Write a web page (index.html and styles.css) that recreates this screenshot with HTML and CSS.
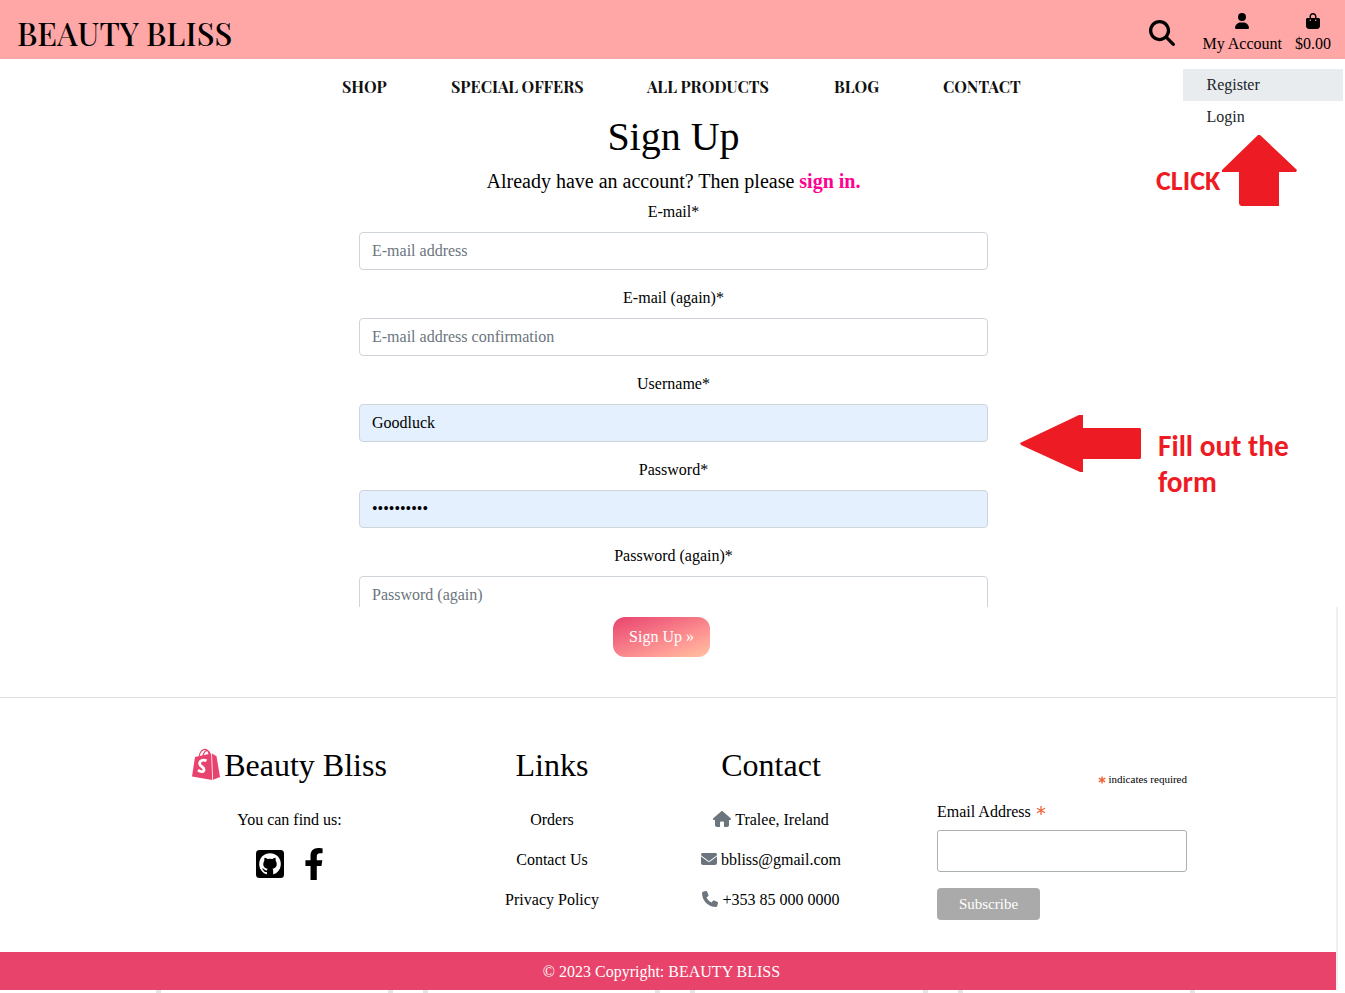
FILE: index.html
```html
<!DOCTYPE html>
<html lang="en">
<head>
<meta charset="utf-8">
<title>Beauty Bliss</title>
<link rel="stylesheet" href="styles.css">
</head>
<body>
<header class="topbar">
  <a class="brand">BEAUTY BLISS</a>
  <div class="tools">
    <svg class="search" viewBox="0 0 512 512"><path d="M416 208c0 45.9-14.9 88.3-40 122.7L502.6 457.4c12.5 12.5 12.5 32.8 0 45.3s-32.8 12.5-45.3 0L330.7 376c-34.4 25.2-76.8 40-122.7 40C93.1 416 0 322.9 0 208S93.1 0 208 0S416 93.1 416 208zM208 352a144 144 0 1 0 0-288 144 144 0 1 0 0 288z"/></svg>
    <div class="tool account">
      <svg viewBox="0 0 448 512"><path d="M224 256A128 128 0 1 0 224 0a128 128 0 1 0 0 256zm-45.7 48C79.8 304 0 383.8 0 482.3C0 498.7 13.3 512 29.7 512H418.3c16.4 0 29.7-13.3 29.7-29.7C448 383.8 368.2 304 269.7 304H178.3z"/></svg>
      <span>My Account</span>
      <div class="dropdown"><a class="active">Register</a><a>Login</a></div>
    </div>
    <div class="tool">
      <svg viewBox="0 0 448 512"><path d="M160 112c0-35.3 28.7-64 64-64s64 28.7 64 64v48H160V112zm-48 48H48c-26.5 0-48 21.5-48 48V416c0 53 43 96 96 96H352c53 0 96-43 96-96V208c0-26.5-21.5-48-48-48H336V112C336 50.1 285.9 0 224 0S112 50.1 112 112v48zm24 48a24 24 0 1 1 0 48 24 24 0 1 1 0-48zm152 24a24 24 0 1 1 48 0 24 24 0 1 1 -48 0z"/></svg>
      <span>$0.00</span>
    </div>
  </div>
</header>
<nav class="nav">
  <a class="n-shop">SHOP</a><a class="n-offers">SPECIAL OFFERS</a><a class="n-all">ALL PRODUCTS</a><a class="n-blog">BLOG</a><a class="n-contact">CONTACT</a>
</nav>
<main class="signup">
  <h1>Sign Up</h1>
  <p class="lead">Already have an account? Then please <a>sign in.</a></p>
  <form class="form">
    <label for="email">E-mail*</label>
    <input id="email" type="email" placeholder="E-mail address">
    <label for="email2">E-mail (again)*</label>
    <input id="email2" type="email" placeholder="E-mail address confirmation">
    <label for="user">Username*</label>
    <input id="user" class="filled" type="text" value="Goodluck">
    <label for="pw">Password*</label>
    <input id="pw" class="filled" type="password" value="goodluck12">
    <label for="pw2">Password (again)*</label>
    <input id="pw2" type="password" placeholder="Password (again)">
  </form>
</main>
<section class="lower">
  <div class="submit"><button class="btn">Sign Up »</button></div>
  <footer class="footer">
    <div class="col about">
      <h2><svg class="bag" viewBox="0 0 28 32"><path class="handle" d="M7 9C7.500 4 10.500 1 13.500 1.300 16 1.600 17 4 17.200 8M10.800 8.500C11.300 4.500 14 2 16 2.700 18 3.500 18 6 18.300 7.500"/><path class="front" d="M3 9 19.200 5.600 20.200 32 0 28.400z"/><path class="side" d="M20 5.600 24.500 8.300 28 29 21 31.800z"/><path class="mark" d="M14.500 12.800C11 11.200 7.600 12.700 7.600 15.500 7.700 19 12.300 18.600 12 21.800 11.700 24.300 8.600 24.200 6 22.200"/></svg>Beauty Bliss</h2>
      <p>You can find us:</p>
      <div class="social">
        <svg class="github" viewBox="0 0 28 28"><rect width="28" height="28" rx="3.500"/><circle class="disc" cx="14" cy="14" r="10.800"/><path d="M8.600 7.700C10 7.600 11.100 8.500 11.700 9Q14 8.400 16.300 9C17 8.500 18.200 7.600 19.400 7.700Q20 9.200 19.600 10.500C22 14.500 20.500 18.300 16.400 18.700 17.400 19.600 17.200 21 17.200 25H10.900V22C8.500 22.500 8 21 7.200 20 6.300 18.900 5.700 18.900 6.200 18.600 8 18.200 8.500 21 10.900 20.400Q11 19.300 11.700 18.700C7.600 18.300 6 14.500 8.400 10.500Q8 9 8.600 7.700z"/></svg>
        <svg class="facebook" viewBox="22 0 276 512"><path d="M279.140 288l14.220-92.660h-88.910v-60.130c0-25.350 12.420-50.060 52.240-50.060h40.420V6.260S260.430 0 225.360 0c-73.220 0-121.080 44.380-121.080 124.720v70.620H22.890V288h81.390v224h100.170V288z"/></svg>
      </div>
    </div>
    <div class="col links">
      <h2>Links</h2>
      <p>Orders</p><p>Contact Us</p><p>Privacy Policy</p>
    </div>
    <div class="col contact">
      <h2>Contact</h2>
      <p><svg class="house" viewBox="0 0 576 512"><path d="M575.800 255.500c0 18-15 32.100-32 32.100h-32l.7 160.200c0 35-28 64.200-64 64.200h-96V376c0-22-18-40-40-40h-48c-22 0-40 18-40 40v136h-96c-35 0-64-29-64-64V287.600H32c-18 0-32-14-32-32.100c0-9 3-17 10-24L266.400 8c7-7 15-8 22-8s15 2 21 7L564.800 231.500c8 7 12 15 11 24z"/></svg>Tralee, Ireland</p>
      <p><svg viewBox="0 0 512 512"><path d="M48 64C21.500 64 0 85.500 0 112c0 15.100 7.100 29.300 19.200 38.400L236.800 313.600c11.400 8.500 27 8.500 38.400 0L492.800 150.400c12.100-9.100 19.200-23.300 19.200-38.400c0-26.500-21.500-48-48-48H48zM0 176V384c0 35.300 28.700 64 64 64H448c35.300 0 64-28.700 64-64V176L294.400 339.200c-22.800 17.100-54 17.100-76.800 0L0 176z"/></svg>bbliss@gmail.com</p>
      <p><svg viewBox="0 0 512 512"><path d="M164.900 24.600c-7.700-18.600-28-28.500-47.400-23.200l-88 24C12.100 30.200 0 46 0 64C0 311.400 200.600 512 448 512c18 0 33.800-12.100 38.600-29.500l24-88c5.300-19.400-4.600-39.700-23.200-47.400l-96-40c-16.300-6.800-35.200-2.100-46.300 11.600L304.700 368C234.300 334.700 177.300 277.700 144 207.300L193.300 167c13.700-11.200 18.400-30 11.600-46.300l-40-96z"/></svg>+353 85 000 0000</p>
    </div>
    <form class="subscribe">
      <div class="required"><svg class="star" viewBox="-5 -5 10 10"><path d="M0-4.500V4.500M-4-2.300 4 2.300M-4 2.300 4-2.300"/></svg>indicates required</div>
      <label for="news">Email Address<svg class="star" viewBox="-5 -5 10 10"><path d="M0-4.500V4.500M-4-2.300 4 2.300M-4 2.300 4-2.300"/></svg></label>
      <input id="news" type="email">
      <button type="button">Subscribe</button>
    </form>
  </footer>
  <div class="copyright">© 2023 Copyright: BEAUTY BLISS</div>
</section>
<div class="ticks"><i></i><i></i><i></i><i></i><i></i><i></i><i></i><i></i></div>
<div class="note click">CLICK</div>
<svg class="arrow up" viewBox="0 0 76 71"><path d="M37 0 39 0 76 35 75 37H58V71H20L18 69V37H1L1 35z"/></svg>
<svg class="arrow left" viewBox="0 0 121 58"><path d="M0 28 59 0H63V13H120L121 14V43L120 44H63V57H60L1 30z"/></svg>
<div class="note fill">Fill out the<br>form</div>
</body>
</html>
```
FILE: styles.css
```css
* { box-sizing: border-box; }
body {
  margin: 0; width: 1345px; height: 993px; overflow: hidden; position: relative;
  display: flex; flex-direction: column;
  background: #fff; color: #000; font: 16px/24px "Liberation Serif", serif;
}
h1, h2, p { margin: 0; font-weight: 400; }
input, button { font: inherit; }

.topbar { height: 59px; flex: none; background: #ffa6a6; display: flex; justify-content: space-between; padding: 0 14px 0 17px; }
.brand { font-family: "Playfair Display", "Liberation Serif", serif; font-weight: 500; font-size: 32px; line-height: 65px; white-space: nowrap; }
.tools { display: flex; align-items: flex-start; }
.search { width: 26px; height: 26px; margin: 20px 27px 0 0; }
.tool { display: flex; flex-direction: column; align-items: center; padding-top: 13px; position: relative; }
.tool > svg { height: 16px; width: 14px; margin-bottom: 3px; }
.account { margin-right: 13px; }
.dropdown { position: absolute; top: 69px; left: -19px; width: 160px; color: #212529; }
.dropdown a { display: block; height: 32px; line-height: 32px; padding-left: 23px; }
.dropdown .active { background: #e9ecef; }

.nav { flex: none; height: 56px; padding: 16px 0 0 342px; display: flex; gap: 64px; font-family: "Playfair Display", "Liberation Serif", serif; font-weight: 700; line-height: 24px; white-space: nowrap; color: #111; }
.n-shop { width: 45px; }
.n-offers { width: 132px; }
.n-all { width: 123px; }
.n-blog { width: 45px; }

.signup { flex: none; height: 492px; overflow: hidden; width: 629px; margin-left: 359px; text-align: center; }
.signup h1 { font-size: 40px; line-height: 44px; }
.lead { font-size: 20px; line-height: 30px; padding-top: 7px; }
.lead a { color: #ff0090; font-weight: 700; }
.form { display: flex; flex-direction: column; padding-top: 4px; }
.form label { line-height: 24px; margin-bottom: 8px; }
.form input { height: 38px; margin-bottom: 16px; border: 1px solid #ced4da; border-radius: 4px; padding: 6px 12px; background: #fff; color: #000; }
.form input::placeholder { color: #6c757d; opacity: 1; }
.form .filled { background: #e4f0fe; }

.lower { flex: none; width: 1338px; height: 383px; border-right: 2px solid #f0f0f0; }
.submit { height: 91px; padding: 10px 0 0 613px; border-bottom: 1px solid #dee2e6; }
.btn { width: 97px; height: 40px; border: 0; border-radius: 12px; padding: 0; color: #fff; background: linear-gradient(160deg, #e8436e, #ff9b95 70%, #ffc3a0); }
.footer { height: 254px; padding-top: 48px; display: flex; text-align: center; }
.col h2 { font-size: 32px; line-height: 38px; margin-bottom: 24px; white-space: nowrap; }
.col p { line-height: 24px; margin-bottom: 16px; }
.about { width: 195px; margin-left: 192px; }
.bag { width: 28px; height: 32px; margin-right: 4px; vertical-align: -4px; }
.bag .handle { fill: none; stroke: #e8436e; stroke-width: 1.2; }
.bag .front, .bag .side { fill: #e8436e; }
.bag .mark { fill: none; stroke: #fff; stroke-width: 2.8; }
.social { display: flex; align-items: center; justify-content: center; gap: 21px; padding-right: 1px; }
.github { width: 28px; height: 28px; }
.github .disc { fill: #fff; }
.facebook { width: 18px; height: 32px; }
.links { width: 100px; margin-left: 115px; }
.contact { width: 150px; margin-left: 94px; }
.contact p svg { width: 16px; height: 16px; margin-right: 4px; vertical-align: -2px; fill: #6c757d; }
.contact p .house { width: 18px; }
.subscribe { width: 250px; margin-left: 91px; padding-top: 24px; display: flex; flex-direction: column; align-items: flex-start; }
.required { align-self: flex-end; font-size: 11px; line-height: 18px; }
.star { fill: none; stroke: #f0643c; stroke-width: 1.3; }
.required .star { width: 8px; height: 8px; margin-right: 3px; vertical-align: -1px; stroke-width: 1.8; }
.subscribe label { line-height: 24px; margin: 12px 0 6px; height: 24px; }
.subscribe label .star { width: 10px; height: 11px; margin-left: 5px; vertical-align: 1px; }
.subscribe input { width: 250px; height: 42px; border: 1px solid #abb0b2; border-radius: 3px; background: #fff; }
.subscribe button { width: 103px; height: 32px; margin-top: 16px; padding: 0; border: 0; border-radius: 4px; background: #aaa; color: #fff; font-size: 15px; }
.copyright { width: 1336px; height: 38px; line-height: 39px; background: #e8436b; color: #fff; text-align: center; padding-right: 13px; }

.ticks { flex: none; height: 3px; display: grid; grid-template-columns: 156px 232px 35px 232px 35px 233px 35px 232px; }
.ticks i { height: 3px; width: 5px; background: #e5e5e5; justify-self: end; margin-right: -5px; }

.note { position: absolute; color: #ed1c24; font: 700 29.33px/36px Carlito, Lato, sans-serif; white-space: nowrap; }
.click { left: 1156px; top: 163px; font-size: 28px; }
.fill { left: 1158px; top: 428px; }
.arrow { position: absolute; fill: #ed1c24; }
.up { left: 1221px; top: 135px; width: 76px; height: 71px; }
.left { left: 1020px; top: 415px; width: 121px; height: 58px; }
```
